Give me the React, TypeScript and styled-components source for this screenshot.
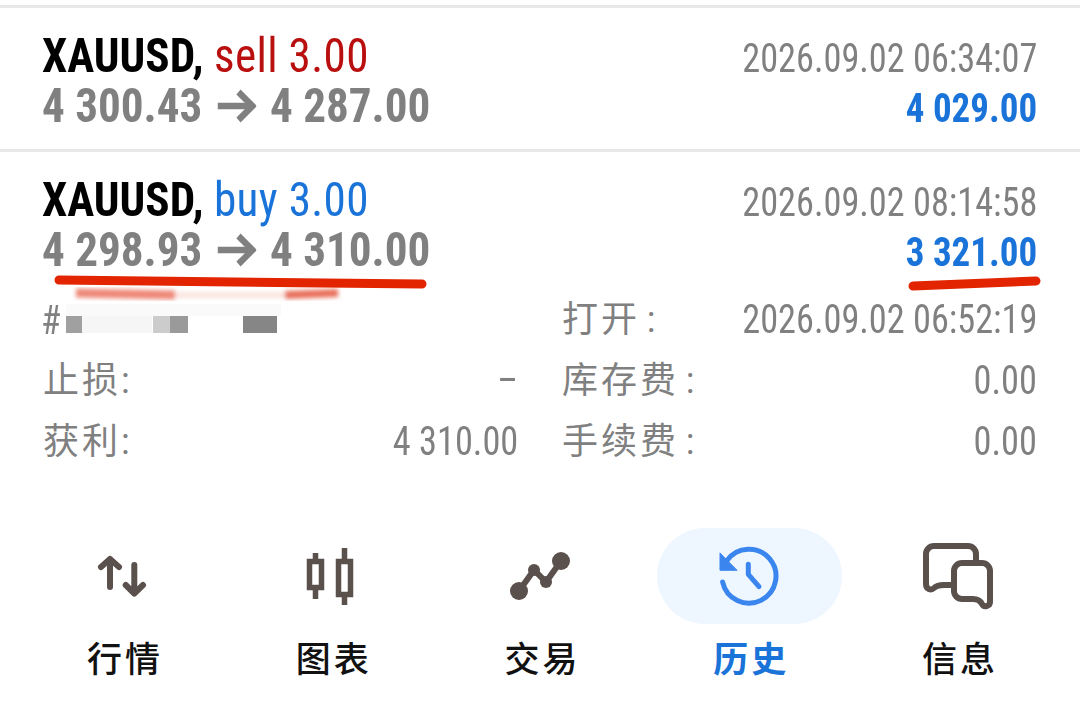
import React from "react";
import styled, { createGlobalStyle } from "styled-components";

const GlobalStyle = createGlobalStyle`
  html, body {
    margin: 0;
    padding: 0;
    background: #fff;
  }
`;

const Page = styled.div`
  position: relative;
  width: 1080px;
  height: 702px;
  overflow: hidden;
  padding-top: 5px;
  box-sizing: border-box;
  background: #fff;
  font-family: Roboto, "Noto Sans CJK SC", sans-serif;
  font-stretch: 75%;
`;

const TradeRow = styled.div<{ $last?: boolean }>`
  display: flex;
  justify-content: space-between;
  border-top: 3px solid #e8e8e8;
  padding: 23px 43px 0 42px;
  box-sizing: border-box;
  height: ${(p) => (p.$last ? "141px" : "144px")};
`;

const LeftColumn = styled.div`
  display: flex;
  flex-direction: column;
`;

const RightColumn = styled.div`
  display: flex;
  flex-direction: column;
  align-items: flex-end;
  padding-top: 3px;
`;

const Title = styled.div`
  font-size: 48px;
  line-height: 50px;
  font-weight: 700;
  color: #000;
  white-space: pre;
  transform: scaleX(0.94);
  transform-origin: left center;
`;

const Side = styled.span<{ $color: string }>`
  font-weight: 400;
  letter-spacing: 0.4px;
  color: ${(p) => p.$color};
`;

const Prices = styled.div`
  display: flex;
  align-items: center;
  gap: 15px;
  font-size: 48px;
  line-height: 50px;
  font-weight: 700;
  color: #808080;
  white-space: pre;
  transform: scaleX(0.94);
  transform-origin: left center;
`;

const TimeText = styled.div`
  font-size: 40px;
  line-height: 50px;
  color: #808080;
  white-space: pre;
  transform: scaleX(0.907);
  transform-origin: right center;
`;

const Profit = styled.div`
  font-size: 40px;
  line-height: 50px;
  font-weight: 700;
  color: #1a73d8;
  white-space: pre;
  transform: scaleX(0.925);
  transform-origin: right center;
`;

const Details = styled.div`
  display: grid;
  grid-template-columns: 475px 475px;
  column-gap: 44px;
  padding: 0 43px;
  height: 238px;
  align-content: start;
`;

const DetailRow = styled.div`
  display: flex;
  justify-content: space-between;
  height: 61px;
  line-height: 61px;
  font-size: 40px;
  color: #808080;
  white-space: pre;
`;

const CjkLabel = styled.span`
  font-size: 36px;
  letter-spacing: 3px;
`;

const DetailValue = styled.span`
  display: inline-block;
  margin-top: -1px;
  transform: scaleX(0.907);
  transform-origin: right center;
`;

const Ticket = styled.span`
  display: inline-block;
  transform: scaleX(0.905);
  transform-origin: left center;
  margin-left: -2px;
`;

const Nav = styled.nav`
  display: grid;
  grid-template-columns: repeat(5, 1fr);
  padding: 0 17px 0 19px;
`;

const NavItem = styled.div`
  display: flex;
  flex-direction: column;
  align-items: center;
`;

const IconPill = styled.div<{ $active?: boolean }>`
  display: flex;
  align-items: center;
  justify-content: center;
  box-sizing: border-box;
  width: 185px;
  height: 96px;
  padding-right: 2px;
  border-radius: 48px;
  background: ${(p) => (p.$active ? "#eef6ff" : "transparent")};
`;

const NavLabel = styled.div<{ $active?: boolean }>`
  margin-top: 11px;
  padding-left: 3px;
  font-family: "Noto Sans CJK SC", sans-serif;
  font-size: 35px;
  line-height: 44px;
  letter-spacing: 3px;
  font-weight: ${(p) => (p.$active ? 700 : 500)};
  color: ${(p) => (p.$active ? "#1a73d8" : "#111")};
`;

const Overlay = styled.svg`
  position: absolute;
  left: 0;
  top: 0;
  pointer-events: none;
`;

const ICON = "#5a504c";

const Arrow = () => (
  <svg width="42" height="34" viewBox="0 0 42 34" fill="none" stroke="#808080" strokeWidth="6.5">
    <path d="M1 17H38" />
    <path d="M23 3L38 17L23 31" />
  </svg>
);

const MarketIcon = () => (
  <svg width="60" height="60" viewBox="0 0 60 60" fill="none" stroke={ICON} strokeWidth="6" strokeLinecap="round" strokeLinejoin="round">
    <path d="M18 13V41M9 21L18 13L27 21" />
    <path d="M42.3 19V47.5M33.7 39L42.3 47.5L51 39" />
  </svg>
);

const ChartIcon = () => (
  <svg width="60" height="60" viewBox="0 0 60 60" fill="none" stroke={ICON} strokeWidth="5.5">
    <rect x="8.5" y="15.5" width="12" height="26" />
    <path d="M14.5 7V15M14.5 42V53" />
    <rect x="37.5" y="15.5" width="12" height="33" />
    <path d="M43.5 2V15M43.5 49V59" />
  </svg>
);

const TradeIcon = () => (
  <svg width="60" height="60" viewBox="0 0 60 60" fill={ICON} stroke={ICON}>
    <path d="M9 45L24 24L36 36L51 15" fill="none" strokeWidth="6" />
    <circle cx="9" cy="45" r="9" stroke="none" />
    <circle cx="24" cy="24" r="6" stroke="none" />
    <circle cx="36" cy="36" r="6" stroke="none" />
    <circle cx="51" cy="15" r="9" stroke="none" />
  </svg>
);

const HistoryIcon = () => (
  <svg width="60" height="60" viewBox="0 0 60 60" fill="none" stroke="#3b86ee" strokeWidth="5" strokeLinecap="round" strokeLinejoin="round">
    <path d="M3.6 36A27 27 0 1 0 8 14.5" />
    <path d="M1 7.3V24.3H17.7Z" fill="#3b86ee" strokeWidth="1" />
    <path d="M29.3 18.3V28.3L40 40.7" />
  </svg>
);

const MessageIcon = () => (
  <svg width="76" height="72" viewBox="0 0 76 72" fill="none" stroke={ICON} strokeWidth="6" strokeLinecap="round" strokeLinejoin="round">
    <path d="M56 21V14a8 8 0 0 0-8-8H14a8 8 0 0 0-8 8V44c0 5 5 7 8 4c3-3 6-3 10-3h10" />
    <path d="M42 23H62a8 8 0 0 1 8 8V62c0 4-6 6-8 2c-2-4-5-5-9-5H42a8 8 0 0 1-8-8V31a8 8 0 0 1 8-8Z" />
  </svg>
);

const navItems = [
  { label: "行情", icon: <MarketIcon /> },
  { label: "图表", icon: <ChartIcon /> },
  { label: "交易", icon: <TradeIcon /> },
  { label: "历史", icon: <HistoryIcon />, active: true },
  { label: "信息", icon: <MessageIcon /> },
];

export default function App() {
  return (
    <Page>
      <GlobalStyle />
      <TradeRow>
        <LeftColumn>
          <Title>
            XAUUSD, <Side $color="#b90f0f">sell 3.00</Side>
          </Title>
          <Prices>
            <span>4 300.43</span>
            <Arrow />
            <span>4 287.00</span>
          </Prices>
        </LeftColumn>
        <RightColumn>
          <TimeText>2026.09.02 06:34:07</TimeText>
          <Profit>4 029.00</Profit>
        </RightColumn>
      </TradeRow>
      <TradeRow $last>
        <LeftColumn>
          <Title>
            XAUUSD, <Side $color="#1a73d8">buy 3.00</Side>
          </Title>
          <Prices>
            <span>4 298.93</span>
            <Arrow />
            <span>4 310.00</span>
          </Prices>
        </LeftColumn>
        <RightColumn>
          <TimeText>2026.09.02 08:14:58</TimeText>
          <Profit>3 321.00</Profit>
        </RightColumn>
      </TradeRow>
      <Details>
        <DetailRow>
          <Ticket>#</Ticket>
        </DetailRow>
        <DetailRow>
          <CjkLabel>打开{"\u200A"}:</CjkLabel>
          <DetailValue>2026.09.02 06:52:19</DetailValue>
        </DetailRow>
        <DetailRow>
          <CjkLabel>止损:</CjkLabel>
          <DetailValue>–</DetailValue>
        </DetailRow>
        <DetailRow>
          <CjkLabel>库存费{"\u200A"}:</CjkLabel>
          <DetailValue>0.00</DetailValue>
        </DetailRow>
        <DetailRow>
          <CjkLabel>获利:</CjkLabel>
          <DetailValue>4 310.00</DetailValue>
        </DetailRow>
        <DetailRow>
          <CjkLabel>手续费{"\u200A"}:</CjkLabel>
          <DetailValue>0.00</DetailValue>
        </DetailRow>
      </Details>
      <Nav>
        {navItems.map((item) => (
          <NavItem key={item.label}>
            <IconPill $active={item.active}>{item.icon}</IconPill>
            <NavLabel $active={item.active}>{item.label}</NavLabel>
          </NavItem>
        ))}
      </Nav>
      <Overlay width="1080" height="702">
        <defs>
          <filter id="smear" x="-20%" y="-300%" width="140%" height="700%">
            <feGaussianBlur stdDeviation="2" />
          </filter>
          <filter id="soft">
            <feGaussianBlur stdDeviation="0.6" />
          </filter>
        </defs>
        <g filter="url(#smear)">
          <path d="M76 293L175 295" stroke="#ee8878" strokeWidth="9" fill="none" />
          <path d="M175 295L285 295" stroke="#f9e0da" strokeWidth="5" />
          <path d="M285 295L338 293" stroke="#e8705c" strokeWidth="8" />
        </g>
        <path d="M59 280L422 284" stroke="#e22400" strokeWidth="9" strokeLinecap="round" />
        <path d="M913 286L1036 281" stroke="#e22400" strokeWidth="9" strokeLinecap="round" />
        <g filter="url(#soft)">
          <rect x="66" y="304" width="215" height="12" fill="#fafafa" />
          <rect x="66" y="316" width="16" height="17" fill="#a0a0a0" />
          <rect x="82" y="316" width="70" height="17" fill="#f6f6f6" />
          <rect x="153" y="316" width="17" height="17" fill="#cccccc" />
          <rect x="170" y="316" width="18" height="17" fill="#9a9a9a" />
          <rect x="243" y="316" width="34" height="17" fill="#868686" />
        </g>
      </Overlay>
    </Page>
  );
}
